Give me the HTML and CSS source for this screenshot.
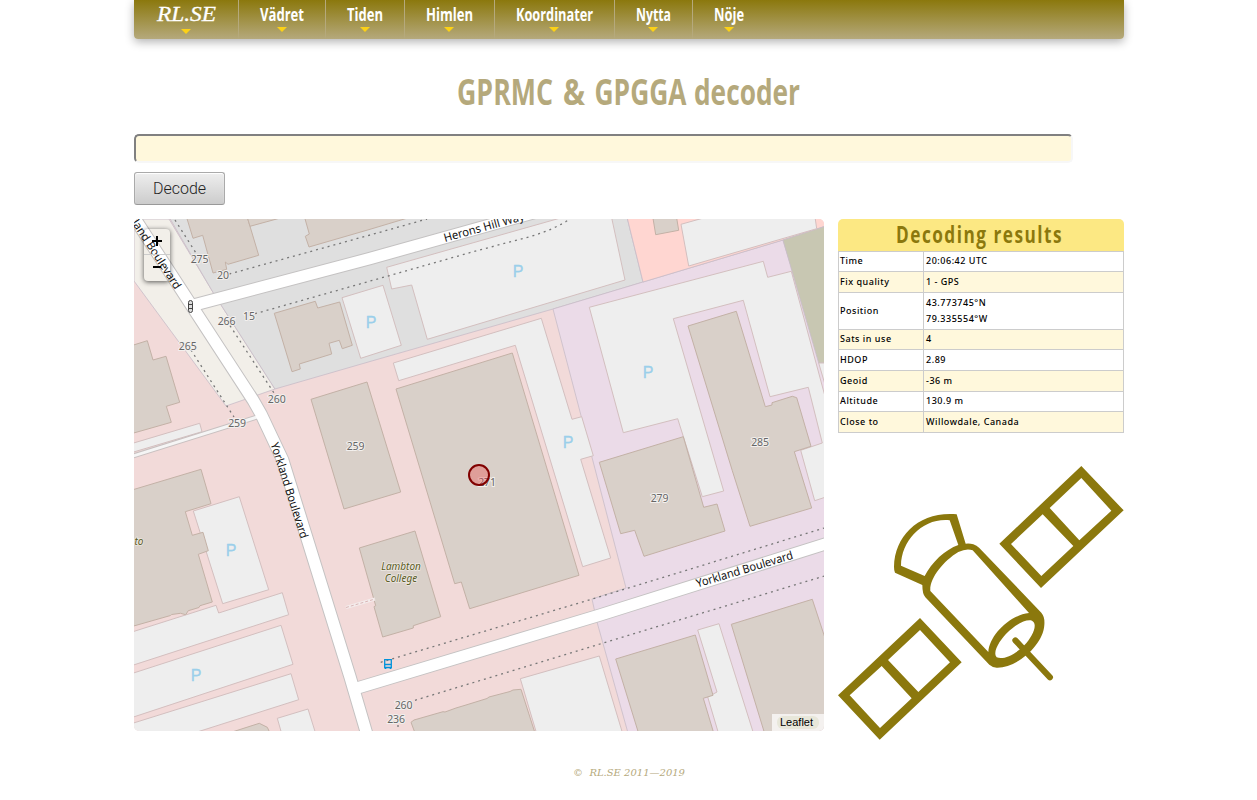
FILE: index.html
```html
<!DOCTYPE html>
<html lang="sv">
<head>
<meta charset="utf-8">
<title>GPRMC &amp; GPGGA decoder</title>
<link rel="stylesheet" href="styles.css">
</head>
<body>
<div class="page">
  <nav class="nav">
    <a class="item logo"><svg width="62" height="28"><text x="2" y="21" textLength="59" lengthAdjust="spacingAndGlyphs">RL.SE</text></svg></a>
    <a class="item w2"><svg width="50" height="26"><text x="3" y="21" textLength="44" lengthAdjust="spacingAndGlyphs">Vädret</text></svg></a>
    <a class="item w3"><svg width="42" height="26"><text x="3" y="21" textLength="36" lengthAdjust="spacingAndGlyphs">Tiden</text></svg></a>
    <a class="item w4"><svg width="53" height="26"><text x="3" y="21" textLength="47" lengthAdjust="spacingAndGlyphs">Himlen</text></svg></a>
    <a class="item w5"><svg width="83" height="26"><text x="3" y="21" textLength="77" lengthAdjust="spacingAndGlyphs">Koordinater</text></svg></a>
    <a class="item w6"><svg width="41" height="26"><text x="3" y="21" textLength="35" lengthAdjust="spacingAndGlyphs">Nytta</text></svg></a>
    <a class="item w7"><svg width="36" height="26"><text x="3" y="21" textLength="30" lengthAdjust="spacingAndGlyphs">Nöje</text></svg></a>
  </nav>
  <h1 class="title"><svg width="346" height="54"><text x="1" y="36" textLength="96" lengthAdjust="spacingAndGlyphs">GPRMC</text><text x="107" y="36" textLength="22" lengthAdjust="spacingAndGlyphs">&amp;</text><text x="138.500" y="36" textLength="92" lengthAdjust="spacingAndGlyphs">GPGGA</text><text x="238" y="36" textLength="106" lengthAdjust="spacingAndGlyphs">decoder</text></svg></h1>
  <form class="form">
    <input class="sentence" type="text" aria-label="NMEA">
    <button class="decode" type="button">Decode</button>
  </form>
  <main class="content">
    <div class="map">
      <svg class="tiles" viewBox="134 219 690 512" width="690" height="512">
        <rect x="134" y="219" width="690" height="512" fill="#f2dad9"/>
        <g class="area">
          <path fill="#f2efe9" d="M134 219H169L214 294 275 389 226 406 134 281Z"/>
          <path fill="#dfdfdf" d="M169 217L214 294 275 389 370 361.500 553 309 610 292 643 282 627 217Z"/>
          <path class="lilac" d="M553 309L643 282 783 240 826 380V733H628L597 622 592 599 626 588 592.700 460Z"/>
          <path fill="#ffd6d1" stroke="#e8aaa5" d="M627 217L643 282 783 240 826 226V217Z"/>
          <path fill="#c8c7b2" d="M783 240L826 226V363H818.700Z"/>
        </g>
        <g class="parking">
          <path d="M386.700 267.300L564 217H611.500L625 280 427.300 339.300 411.700 285 391.700 289Z"/>
          <path d="M342 297.700L383 285.300 401.300 345.300 360.700 358.300Z"/>
          <path d="M393.300 363L541.300 318.300 572 419.300 581.700 416.700 593.300 455.700 580.700 459.300 610.700 558 582.700 566.700 515.300 345.300 398.700 380.700Z"/>
          <path d="M589.300 307.300L763.300 261.300 767.700 277.300 791.300 271.300 826 400V497L814.700 500.700 800.700 450.300 822.300 443 808.300 387.300 770 396.700 743.300 300.300 673.300 318.700 723.700 491 702.300 496.700 677.700 418.700 623.300 432.700Z"/>
          <path d="M818.700 363H826V388Z"/>
          <path d="M193.300 511L239.300 496.700 268.700 589.700 222.700 603.700Z"/>
          <path d="M132 632L216 605.300 218.700 613 282.300 592.700 288.700 614.700 132 665.500Z"/>
          <path d="M132 673.500L281 625.300 293 664.300 132 717.500Z"/>
          <path d="M132 723.500L291 673.700 298.700 699.700 194 733H132Z"/>
          <path d="M277.300 718.300L308 709 315.500 733H281.500Z"/>
          <path d="M520.300 678.700L599.300 656 622.500 733H536.500Z"/>
          <path d="M697.700 630L719 623.700 753.400 733H718.400L707.700 697 717 692Z"/>
          <path d="M681 224.300L707 217H815L816.700 228.700 688.700 266Z"/>
          <path d="M132 443.500L199.700 423.300 202 431.700 132 452.500Z"/>
        </g>
        <g class="building">
          <path d="M186.500 217L193 238.300 202.700 235.300 213 273 226.700 269.300 225.300 262 228 264.300 258.700 255.300 247.200 217Z"/>
          <path d="M250 226.300L284 217H247.200Z"/>
          <path d="M304.500 217L309.300 234 305.300 236.300 309 247 370 229.300 411 217Z"/>
          <path d="M274.300 313.300L315.300 301.300 317.700 308 339.700 302 352.300 345.300 342.300 348.700 339.300 340.300 329 343.300 331.700 354 299.300 364 300.300 369 292 371.700Z"/>
          <path d="M132 345.500L147.300 340.700 153 360 166 356.300 179.700 402.300 166.300 406.300 171.300 422.300 132 433.500Z"/>
          <path d="M311 399.300L367 382 400.700 492 344 509Z"/>
          <path d="M396 389L512.300 353 579 575.300 469.700 608.700 461.300 582 454.700 583.700Z"/>
          <path d="M359.300 548L415 531 440.700 616.700 413.300 625.700V628L382.700 637 374 606.700 375.700 605.700Z"/>
          <path d="M132 490L201 469.300 211 503.700 185.300 511.700 192.300 535.300 203 532.300 208.300 550.700 198.300 554.300 212.300 602 200 605.700 199 607.500 188.300 610.700 185.700 614.700 180.500 613.300 171.700 614.500 170.500 615.500 132 626.500Z"/>
          <path d="M229 733L259.300 723.300 267.300 727.300 270 733Z"/>
          <path d="M411 722.300L414 720 443 711.700 445 712 456 708 466 705 487 698.500 489 697 510 691.500 513 690 521 689.300 535 733H415Z"/>
          <path d="M599.300 462.300L683.300 436.700 703.700 507.300 717 504 725 531 644 556.300 634.700 530.300 620.700 533.700Z"/>
          <path d="M688 326L736.300 311.300 765.300 406.700 772 405V402.700L792.300 396.300 796.700 397.700 811 446.300 794.300 451.700 811.700 508 750 526.300 732.300 470.700Z"/>
          <path d="M615.700 659L695.300 635 713 695.300 703.300 698.300 713.700 733H638.500Z"/>
          <path d="M731.300 624.300L812.300 599.300 826 641V733H764.500Z"/>
          <path d="M652.800 217L655.700 234.700 678.700 230.300 676.500 217Z"/>
        </g>
        <g class="road">
          <path class="minor" d="M130 457L257 417"/>
          <path class="case" d="M128 208L253 400 261 414 282.700 460 350 676.700 368 738M194 305L370 258.500 540 211M354 689L600 615 830 542.500"/>
          <path class="minor-fill" d="M130 457L257 417"/>
          <path class="fill" d="M128 208L253 400 261 414 282.700 460 350 676.700 368 738M194 305L370 258.500 540 211M354 689L600 615 830 542.500"/>
        </g>
        <path class="dots" d="M175 220L196 253M229.300 274L370 235 427 219M255 313.700L368 281.700 476.700 250.700 530 236.700Q555 229 570 219M230 325.700L274 393M191 350L234 417M380.700 662.300L600 596.700 826 527.500M415 700.300L600 644 826 575.500M398 725V728"/>
        <path d="M346 607.500L375 599" stroke="#f4ecec" stroke-width="3"/>
        <path d="M346 607.500L375 599" stroke="#d9b5b5" stroke-dasharray="3 2"/>
        <g class="num">
          <text x="199.500" y="262.500">275</text><text x="223" y="279">20</text><text x="249" y="319.500">15</text>
          <text x="226.500" y="325">266</text><text x="187.700" y="350">265</text><text x="276.700" y="402.500">260</text>
          <text x="237" y="427">259</text><text x="355.500" y="450">259</text><text x="487" y="485.500">271</text>
          <text x="760" y="446">285</text><text x="659.500" y="502">279</text><text x="403.500" y="708.500">260</text><text x="396" y="722.500">236</text>
        </g>
        <g class="p">
          <text x="518" y="276.700">P</text><text x="371" y="327.700">P</text><text x="568" y="447.700">P</text>
          <text x="648" y="377.700">P</text><text x="231" y="555.700">P</text><text x="196" y="680.700">P</text>
        </g>
        <g class="street">
          <text transform="translate(118.500 203) rotate(57)" textLength="104" lengthAdjust="spacingAndGlyphs">Yorkland Boulevard</text>
          <text transform="translate(445 242) rotate(-15.500)" textLength="83" lengthAdjust="spacingAndGlyphs">Herons Hill Way</text>
          <text transform="translate(270.500 444) rotate(72.300)" textLength="100" lengthAdjust="spacingAndGlyphs">Yorkland Boulevard</text>
          <text transform="translate(697.500 587.500) rotate(-16.700)" textLength="100.500" lengthAdjust="spacingAndGlyphs">Yorkland Boulevard</text>
        </g>
        <g class="poi"><text x="401" y="570">Lambton</text><text x="401" y="582">College</text><text x="143.500" y="545" class="cut">to</text></g>
        <g fill="none" stroke="#444" stroke-width="1"><rect x="188.500" y="300.500" width="4" height="12" rx="2" fill="#ddd"/><path d="M188 304.500H193M188 308.500H193"/></g>
        <g fill="none" stroke="#0092da" stroke-width="1.300"><path d="M384.700 667.500V659.700H391.300V667.500ZM384.700 664.500H391.300"/><path d="M385.500 667V669M390.500 667V669" stroke-width="1.600"/></g>
        <circle cx="479" cy="475" r="10" fill="#e84545" fill-opacity=".36" stroke="#800000" stroke-width="2"/>
      </svg>
      <div class="zoom">
        <svg width="26" height="52"><path d="M0 25.500H26" stroke="#ccc"/><path d="M8 12H18M13 7V17M9 38H17" stroke="#000" stroke-width="2"/></svg>
      </div>
      <div class="credit"><span>Leaflet</span></div>
    </div>
    <aside class="side">
      <div class="results">
        <h2 class="heading"><svg width="172" height="34"><text x="2" y="24" textLength="167" lengthAdjust="spacingAndGlyphs">Decoding results</text></svg></h2>
        <dl class="rows">
          <dt>Time</dt><dd>20:06:42 UTC</dd>
          <dt class="alt">Fix quality</dt><dd class="alt">1 - GPS</dd>
          <dt>Position</dt><dd>43.773745°N<br>79.335554°W</dd>
          <dt class="alt">Sats in use</dt><dd class="alt">4</dd>
          <dt>HDOP</dt><dd>2.89</dd>
          <dt class="alt">Geoid</dt><dd class="alt">-36 m</dd>
          <dt>Altitude</dt><dd>130.9 m</dd>
          <dt class="alt">Close to</dt><dd class="alt">Willowdale, Canada</dd>
        </dl>
      </div>
      <svg class="satellite" viewBox="24 33 858 822" width="286" height="274">
        <g fill="#8b780d" fill-rule="evenodd">
          <path d="M754 33L881 166 633 399 508 266ZM754 69L844 167 748 256 659 159ZM638 178L730 273 634 363 543 267Z"/>
          <path d="M270 489L395 622 149 854 24 721ZM270 525L360 622 265 711 174 615ZM155 633L245 730 150 819 59 721Z"/>
          <path d="M380 178L407 266Q418 264 430 268 440 271 448 279L634 473Q645 485 643 510C640 570 560 640 500 638Q487 637 478 629L286 427Q277 417 277 390L195 353Q192 348 192 335C194 240 270 168 380 178ZM359 196L385 270C345 284 305 322 284 363L213 332C214 255 280 188 359 196ZM428 286L597 474C540 480 478 540 475 591L301 408C298 370 340 318 385 291Q410 279 428 286ZM606 497C625 507 608 545 583 571C555 600 520 615 500 607C485 590 515 550 530 535C560 505 590 492 606 497Z"/>
        </g>
        <path d="M556 556L660 667" fill="none" stroke="#8b780d" stroke-width="18" stroke-linecap="round"/>
      </svg>
    </aside>
  </main>
  <footer class="footer">©&nbsp; RL.SE 2011—2019</footer>
</div>
</body>
</html>
```
FILE: styles.css
```css
body { margin: 0; background: #fff; font-family: "Noto Sans", sans-serif; }
svg { display: block; }
.page { width: 990px; margin: 0 133px 0 134px; }

.nav { display: flex; height: 39px; background: linear-gradient(#8b780d, #b5a97c); border-radius: 0 0 4px 4px; box-shadow: 0 3px 10px rgba(0,0,0,.3); }
.item { box-sizing: border-box; display: flex; flex-direction: column; align-items: center; border-right: 1px solid #b5a97c; }
.item svg { overflow: visible; }
.item::after { content: ""; margin-top: 1px; border: 5px solid transparent; border-top-color: #fcd116; border-bottom: 0; }
.item text { font: bold 17px "Open Sans", sans-serif; fill: #fff; }
.logo { width: 105px; }
.item.logo text { font: italic 21px "Liberation Serif", serif; stroke: #fff; stroke-width: .3px; }
.w2 { width: 87px; }
.w3 { width: 79px; }
.w4 { width: 90px; padding-right: 1px; }
.w5 { width: 120px; padding-right: 1px; }
.w6 { width: 78px; padding-right: 1px; }
.w7 { width: 72px; border: 0; }

.title { margin: 30px 0 0; height: 65px; display: flex; justify-content: center; }
.title text { font: bold 35px "Open Sans", sans-serif; fill: #b5a97c; }

.form { display: flex; flex-direction: column; align-items: flex-start; gap: 9px; }
.sentence { box-sizing: border-box; width: 939px; height: 29px; border: 2px solid; border-color: #808080 #f7f7f7 #f7f7f7 #808080; border-radius: 5px; background: #fff8dc; }
.decode { box-sizing: border-box; width: 91px; height: 33px; padding: 0; border: 1px solid #aaa; border-bottom-color: #999; border-radius: 3px; background: linear-gradient(#eee, #ccc); box-shadow: inset 0 1px 1px #fff; font: 300 16px Roboto, sans-serif; color: #222; }

.content { display: flex; gap: 14px; margin-top: 14px; }
.map { position: relative; width: 690px; height: 512px; border-radius: 5px; overflow: hidden; }
.area path { stroke: #c8bcc8; stroke-width: .8; }
.area .lilac { fill: #ebdbe8; }
.parking path { fill: #eee; stroke: #d3bfbf; }
.building path { fill: #d9d0c9; stroke: #c3b1a6; }
.road path { fill: none; stroke-linejoin: round; }
.road .case { stroke: #c4c2c2; stroke-width: 13.3; }
.road .fill { stroke: #fff; stroke-width: 11.3; }
.road .minor { stroke: #c8c0c0; stroke-width: 5; }
.road .minor-fill { stroke: #f5f5f5; stroke-width: 3; }
.dots { fill: none; stroke: #777; stroke-width: 1.3; stroke-dasharray: 2 4; }
.num text, .poi text, .p text { text-anchor: middle; }
.num text { font: 10.5px "Noto Sans", sans-serif; letter-spacing: -.1px; fill: #666; stroke: #f3f0ee; stroke-width: 2px; paint-order: stroke; }
.p text { font: 16px "Liberation Sans", sans-serif; fill: #9bcfea; stroke: #9bcfea; stroke-width: .3px; }
.street text { font: 11.5px "Noto Sans", sans-serif; fill: #111; }
.poi text { font: italic 10px "Noto Sans", sans-serif; fill: #5a5a1e; stroke: #eee9e4; stroke-width: 1.5px; paint-order: stroke; }
.poi .cut { text-anchor: end; }
.zoom { position: absolute; left: 10px; top: 10px; border-radius: 4px; box-shadow: 0 1px 5px rgba(0,0,0,.65); }
.credit { position: absolute; right: 0; bottom: 0; box-sizing: border-box; width: 52px; height: 17px; padding: 2px 5px; background: rgba(255,255,255,.7); font: 11px/13px "Liberation Sans", sans-serif; color: #000; }
.credit span { display: block; width: 42px; text-align: center; text-indent: -3px; border-radius: 6px; background: #e8e7da; }

.side { width: 286px; }
.heading { margin: 0; height: 32px; display: flex; justify-content: center; background: #fce883; border-radius: 5px 5px 0 0; }
.heading svg { overflow: visible; margin-right: 2px; }
.heading text { font: bold 23px "Open Sans", sans-serif; letter-spacing: 2px; fill: #8b780d; }
.rows { box-sizing: border-box; margin: 0; display: grid; grid-template-columns: 85px 199px; grid-template-rows: 20px 21px 37px 20px 21px 21px 20px 21px; width: 286px; border: 1px solid #ccc; border-bottom: 0; font: 500 9px/16px "Noto Sans", sans-serif; letter-spacing: .52px; color: #000; }
.rows dt, .rows dd { box-sizing: border-box; margin: 0; display: flex; align-items: center; padding: 0 0 1px 2px; border-bottom: 1px solid #ccc; }
.rows dt { border-right: 1px solid #ccc; padding-left: 1px; }
.rows .alt { background: #fff8dc; }
.satellite { margin-top: 33px; }

.footer { margin-top: 26px; text-align: center; font: italic 10px/14px "DejaVu Serif", serif; color: #b5a97c; }
```
